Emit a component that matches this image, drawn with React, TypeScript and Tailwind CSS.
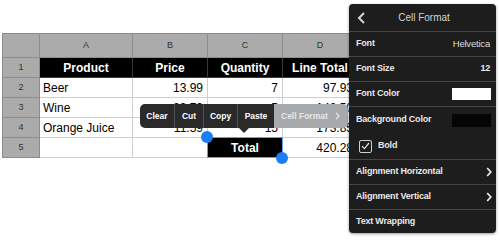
import React from "react";

const font = { fontFamily: '"Liberation Sans", Arial, sans-serif' };

type Cell = { t: string; kind: "hdr" | "black" | "left" | "right" | "empty" | "total" };

const cols = ["w-[37px]", "w-[93px]", "w-[75px]", "w-[75px]", "w-[75px]"];

const rows: Cell[][] = [
  [
    { t: "Product", kind: "black" },
    { t: "Price", kind: "black" },
    { t: "Quantity", kind: "black" },
    { t: "Line Total", kind: "black" },
  ],
  [
    { t: "Beer", kind: "left" },
    { t: "13.99", kind: "right" },
    { t: "7", kind: "right" },
    { t: "97.93", kind: "right" },
  ],
  [
    { t: "Wine", kind: "left" },
    { t: "29.70", kind: "right" },
    { t: "5", kind: "right" },
    { t: "148.50", kind: "right" },
  ],
  [
    { t: "Orange Juice", kind: "left" },
    { t: "11.59", kind: "right" },
    { t: "15", kind: "right" },
    { t: "173.85", kind: "right" },
  ],
  [
    { t: "", kind: "empty" },
    { t: "", kind: "empty" },
    { t: "Total", kind: "total" },
    { t: "420.28", kind: "right" },
  ],
];

function DataCell({ c, w }: { c: Cell; w: string }) {
  if (c.kind === "black" || c.kind === "total") {
    return (
      <div className={`${w} h-[20px] shrink-0 bg-black border-r border-b border-[#3a3a3a] flex items-center justify-center text-white text-[12px] font-bold`}>
        {c.t}
      </div>
    );
  }
  if (c.kind === "left") {
    return (
      <div className={`${w} h-[20px] shrink-0 bg-white border-r border-b border-[#cfcfcf] flex items-center pl-[3px] text-black text-[12px]`}>
        {c.t}
      </div>
    );
  }
  if (c.kind === "right") {
    return (
      <div className={`${w} h-[20px] shrink-0 bg-white border-r border-b border-[#cfcfcf] flex items-center justify-end pr-[4px] text-black text-[12px]`}>
        {c.t}
      </div>
    );
  }
  return <div className={`${w} h-[20px] shrink-0 bg-white border-r border-b border-[#cfcfcf]`} />;
}

function Sheet() {
  return (
    <div className="flex flex-col border-l border-t border-[#8a8a8a] w-max">
      <div className="flex">
        <div className={`${cols[0]} h-[24px] shrink-0 bg-[#aaabaa] border-r border-b border-[#8c8c8c]`} />
        {["A", "B", "C", "D"].map((l, i) => (
          <div
            key={l}
            className={`${cols[i + 1]} h-[24px] shrink-0 bg-[#aaabaa] border-r border-b border-[#8c8c8c] flex items-center justify-center text-[9px] text-[#333]`}
          >
            {l}
          </div>
        ))}
      </div>
      {rows.map((r, ri) => (
        <div key={ri} className="flex">
          <div className={`${cols[0]} h-[20px] shrink-0 bg-[#aaabaa] border-r border-b border-[#8c8c8c] flex items-center justify-center text-[9px] text-[#333]`}>
            {ri + 1}
          </div>
          {r.map((c, ci) => (
            <DataCell key={ci} c={c} w={cols[ci + 1]} />
          ))}
        </div>
      ))}
    </div>
  );
}

function ContextMenu() {
  return (
    <div className="absolute left-[140px] top-[104px] h-[24px] flex text-[8.5px] font-bold">
      <div className="flex rounded-l-[5px] bg-[#2a2a2a] text-white overflow-hidden">
        <div className="w-[34px] flex items-center justify-center">Clear</div>
        <div className="w-[29px] flex items-center justify-center border-l border-[#505050]">Cut</div>
        <div className="w-[34px] flex items-center justify-center border-l border-[#505050]">Copy</div>
        <div className="w-[37px] flex items-center justify-center border-l border-[#505050]">Paste</div>
      </div>
      <div className="w-[74px] bg-[#a7aaac] rounded-r-[5px] flex items-center justify-between pl-[7px] pr-[8px]">
        <span className="font-bold text-[#e6e6e6]">Cell Format</span>
        <svg width="5" height="8" viewBox="0 0 5 8">
          <path d="M1 0.8 L4 4 L1 7.2" fill="none" stroke="#eeeeee" strokeWidth="1.1" />
        </svg>
      </div>
      <div className="absolute left-[99px] top-[24px] w-0 h-0 border-l-[5px] border-r-[5px] border-t-[5px] border-l-transparent border-r-transparent border-t-[#2a2a2a]" />
    </div>
  );
}

function Chevron() {
  return (
    <svg width="6" height="10" viewBox="0 0 6 10">
      <path d="M1.2 1 L4.8 5 L1.2 9" fill="none" stroke="#e5e5e5" strokeWidth="1.8" />
    </svg>
  );
}

function Panel() {
  return (
    <div className="absolute left-[349px] top-[4px] w-[147px] h-[229px] bg-[#1d1d1d] rounded-[4px] shadow-[0_1px_3px_rgba(0,0,0,0.4)] flex flex-col text-[9px] font-bold tracking-[-0.2px] text-[#e8e8e8] overflow-hidden">
      <div className="h-[28px] shrink-0 flex items-center border-b border-[#474747] relative">
        <div className="pl-[8px] flex items-center">
          <svg width="9" height="12" viewBox="0 0 9 12">
            <path d="M7 1 L2 6 L7 11" fill="none" stroke="#d4d4d4" strokeWidth="2" />
          </svg>
        </div>
        <div className="absolute inset-0 flex items-center justify-center text-[10px] font-normal tracking-normal text-[#d2d2d2] pl-[3px]">
          Cell Format
        </div>
      </div>
      <div className="h-[25px] shrink-0 flex items-center justify-between pl-[7px] pr-[6px] border-b border-[#474747]">
        <span>Font</span>
        <span className="font-normal text-[#dcdcdc] text-[9.5px]">Helvetica</span>
      </div>
      <div className="h-[25px] shrink-0 flex items-center justify-between pl-[7px] pr-[6px] border-b border-[#474747]">
        <span>Font Size</span>
        <span>12</span>
      </div>
      <div className="h-[25px] shrink-0 flex items-center justify-between pl-[7px] pr-[5px] border-b border-[#474747]">
        <span>Font Color</span>
        <div className="w-[39px] h-[12px] bg-white" />
      </div>
      <div className="h-[26px] shrink-0 flex items-center justify-between pl-[7px] pr-[5px]">
        <span>Background Color</span>
        <div className="w-[39px] h-[13px] bg-[#050505]" />
      </div>
      <div className="h-[27px] shrink-0 flex items-center pl-[10px] border-b border-[#474747]">
        <div className="w-[13px] h-[13px] border border-[#cfcfcf] rounded-[2px] flex items-center justify-center">
          <svg width="9" height="8" viewBox="0 0 9 8">
            <path d="M1 4.2 L3.4 6.6 L8 1" fill="none" stroke="#e0e0e0" strokeWidth="1.2" />
          </svg>
        </div>
        <span className="ml-[6px]">Bold</span>
      </div>
      <div className="h-[25px] shrink-0 flex items-center justify-between pl-[7px] pr-[4px] border-b border-[#474747]">
        <span>Alignment Horizontal</span>
        <Chevron />
      </div>
      <div className="h-[25px] shrink-0 flex items-center justify-between pl-[7px] pr-[4px] border-b border-[#474747]">
        <span>Alignment Vertical</span>
        <Chevron />
      </div>
      <div className="flex-1 flex items-center pl-[7px]">
        <span>Text Wrapping</span>
      </div>
    </div>
  );
}

export default function App() {
  return (
    <div className="relative w-[500px] h-[242px] bg-white overflow-hidden" style={font}>
      <div className="pt-[33px] pl-[2px]">
        <Sheet />
      </div>
      <div className="absolute left-[207px] top-[137px] w-[76px] h-[21px] border-[1.5px] border-[#5aa2f5]" />
      <div className="absolute left-[201px] top-[131px] w-[12px] h-[12px] rounded-full bg-[#1a7ef7]" />
      <div className="absolute left-[276px] top-[152px] w-[12px] h-[12px] rounded-full bg-[#1a7ef7]" />
      <ContextMenu />
      <Panel />
    </div>
  );
}
